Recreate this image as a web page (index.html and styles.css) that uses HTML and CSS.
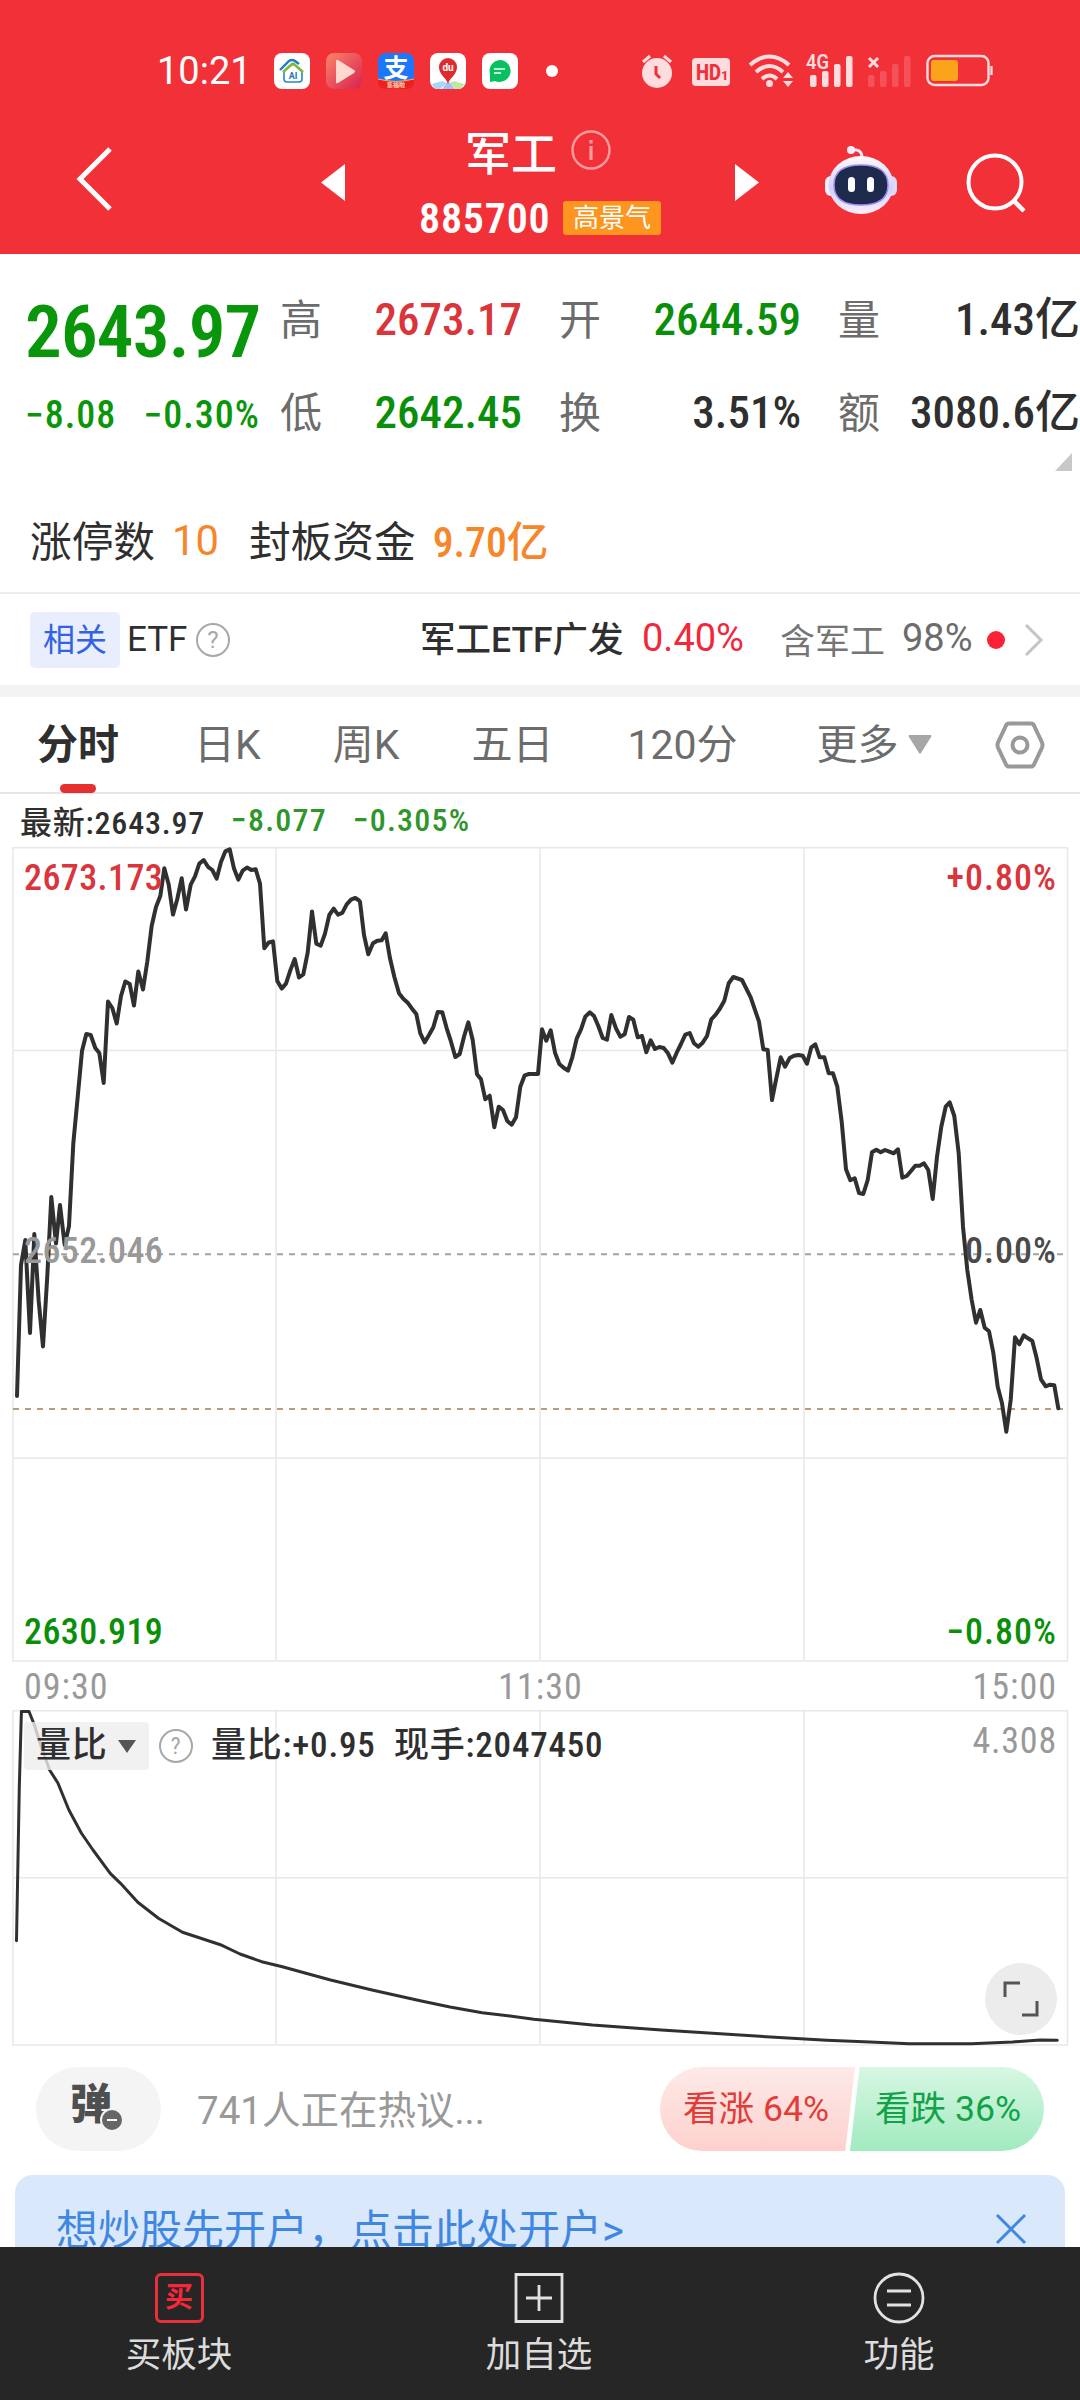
FILE: index.html
```html
<!DOCTYPE html>
<html lang="zh-CN">
<head>
    <meta charset="UTF-8">
    <meta name="viewport" content="width=device-width, initial-scale=1.0">
    <title>军工 885700</title>
    <link rel="stylesheet" href="styles.css">
</head>
<body>
<div class="app">
    <!-- Header -->
    <header class="header">
        <div class="status-bar">
            <span class="clock">10:21</span>
            <div class="app-icons">
                <svg width="36" height="36" viewBox="0 0 36 36">
                    <rect width="36" height="36" rx="8" fill="#fff"/>
                    <path d="M10 19v7q0 3 3 3h12q3 0 3-3v-8" fill="none" stroke="#2b86c5" stroke-width="1.6"/>
                    <path d="M6 17L15 8q3-2 6 0l4 3" fill="none" stroke="#1d7fc0" stroke-width="2.4"/>
                    <path d="M9 19l8-7q2-2 4 0l8 7" fill="none" stroke="#7db93b" stroke-width="2.6"/>
                    <text x="19" y="26" font-size="9" font-weight="700" text-anchor="middle" fill="#2277b8">AI</text>
                </svg>
                <svg width="36" height="36" viewBox="0 0 36 36">
                    <defs>
                        <linearGradient id="play" x1="0" y1="0" x2="1" y2="1">
                            <stop offset="0" stop-color="#fb8468"/>
                            <stop offset="1" stop-color="#d92250"/>
                        </linearGradient>
                    </defs>
                    <rect width="36" height="36" rx="8" fill="url(#play)"/>
                    <path d="M10 8v21q0 2 2 1l16-10q2-2 0-3L12 7q-2-1-2 1z" fill="#ffd9d0"/>
                </svg>
                <svg width="36" height="36" viewBox="0 0 36 36">
                    <rect width="36" height="36" rx="8" fill="#1c77fb"/>
                    <path d="M0 26q18 5 36 0v3q0 7-8 7H8q-8 0-8-7z" fill="#f01f1c"/>
                    <path d="M0 26q18 5 36 0" fill="none" stroke="#ffb054" stroke-width="1.2"/>
                    <text x="18" y="24" font-size="25" font-weight="700" text-anchor="middle" fill="#fff">支</text>
                    <text x="18" y="34" font-size="6" font-weight="700" text-anchor="middle" fill="#ffd9b8">集福啦</text>
                </svg>
                <svg width="36" height="36" viewBox="0 0 36 36">
                    <rect width="36" height="36" rx="8" fill="#fff"/>
                    <path d="M2 31l10-3 5 2-7 6H8q-5 0-6-5z" fill="#a9d6f5"/>
                    <path d="M34 31l-10-3-5 2 7 6h2q5 0 6-5z" fill="#bfe6a5"/>
                    <path d="M12 36l6-8 7 8z" fill="#9cc5f7"/>
                    <path d="M18 31c-2-7-9-9-9-17a9 9 0 0 1 18 0c0 8-7 10-9 17z" fill="#e12a2d"/>
                    <text x="18" y="18" font-size="10" font-weight="700" text-anchor="middle" fill="#fff">du</text>
                </svg>
                <svg width="36" height="36" viewBox="0 0 36 36">
                    <rect width="36" height="36" rx="8" fill="#fff"/>
                    <path d="M18 7a11 11 0 1 1-5 21l-5 1v-8A11 11 0 0 1 18 7z" fill="#07c160"/>
                    <path d="M12 16h11M12 20h7" stroke="#fff" stroke-width="1.6"/>
                </svg>
            </div>
            <span class="status-dot"></span>
            <svg class="status-icons" width="360" height="40" viewBox="636 50 360 40">
                <g fill="#ffdcdd">
                    <circle cx="657" cy="73" r="15"/>
                    <path d="M643 62l7-6M671 62l-7-6" stroke="#ffdcdd" stroke-width="3"/>
                    <path d="M656 66v8l4 4" fill="none" stroke="#f23038" stroke-width="3"/>
                    <rect x="692" y="58" width="38" height="28" rx="4"/>
                    <circle cx="769.500" cy="83.500" r="3.500"/>
                    <path d="M783 80l5-6 5 6zM783 83l5 6 5-6z" transform="translate(0 -2)"/>
                    <rect x="810" y="75" width="6.500" height="12" rx="2"/>
                    <rect x="822" y="71" width="6.500" height="16" rx="2"/>
                    <rect x="834" y="64" width="6.500" height="23" rx="2"/>
                    <rect x="846" y="56" width="6.500" height="31" rx="2"/>
                    <text x="806" y="69" font-size="20" font-weight="600" textLength="23" lengthAdjust="spacingAndGlyphs">4G</text>
                </g>
                <text x="696" y="80" font-size="22" font-weight="800" fill="#f23038" textLength="25" lengthAdjust="spacingAndGlyphs">HD</text>
                <text x="721" y="80" font-size="13" font-weight="800" fill="#f23038">1</text>
                <g fill="none" stroke="#ffdcdd" stroke-width="4">
                    <path d="M750 65q19.500-17 39 0"/>
                    <path d="M756 72q13.500-12 27 0"/>
                    <path d="M762 79q7.500-7 15 0"/>
                    <path d="M869 58l9 9M878 58l-9 9" stroke-width="3"/>
                </g>
                <g fill="#fff" opacity="0.160">
                    <rect x="868" y="75" width="6.500" height="12" rx="2"/>
                    <rect x="880" y="71" width="6.500" height="16" rx="2"/>
                    <rect x="892" y="64" width="6.500" height="23" rx="2"/>
                    <rect x="904" y="56" width="6.500" height="31" rx="2"/>
                </g>
                <rect x="927.500" y="56" width="61" height="29" rx="7" fill="none" stroke="#ffdcdd" stroke-width="2.400"/>
                <rect x="931" y="60" width="27" height="21" rx="3" fill="#fba31a"/>
                <path d="M991.500 66v9" stroke="#ffdcdd" stroke-width="2.400"/>
            </svg>
        </div>
        <div class="nav-bar">
            <svg class="back" width="40" height="66" viewBox="0 0 40 66"><path d="M35 3L5 33l30 30" fill="none" stroke="#fff" stroke-width="5"/></svg>
            <svg class="prev" width="24" height="37" viewBox="0 0 24 37"><path d="M24 0v37L0 18.500z" fill="#fff"/></svg>
            <div class="title">
                <div class="title-name">
                    <span>军工</span>
                    <svg width="40" height="40" viewBox="0 0 40 40"><circle cx="20" cy="20" r="18.500" fill="none" stroke="#ff9c9f" stroke-width="2.400"/><path d="M20 16v14M20 10v3.500" stroke="#ff9c9f" stroke-width="3.200"/></svg>
                </div>
                <div class="title-code">
                    <span>885700</span>
                    <span class="badge">高景气</span>
                </div>
            </div>
            <svg class="next" width="24" height="37" viewBox="0 0 24 37"><path d="M0 0v37l24-18.500z" fill="#fff"/></svg>
            <svg class="robot" width="72" height="68" viewBox="0 0 72 68">
                <defs>
                    <linearGradient id="face" x1="0" y1="0" x2="0" y2="1">
                        <stop offset="0" stop-color="#fffafa"/>
                        <stop offset="0.550" stop-color="#cfd0fb"/>
                        <stop offset="1" stop-color="#fbeef8"/>
                    </linearGradient>
                </defs>
                <path d="M26 4q11-2 11 8" fill="none" stroke="#f1e8fb" stroke-width="3"/>
                <circle cx="26" cy="4" r="4" fill="#f8eefb"/>
                <rect x="0" y="30" width="12" height="20" rx="6" fill="#f4effc"/>
                <rect x="60" y="30" width="12" height="20" rx="6" fill="#ded8fb"/>
                <ellipse cx="36" cy="39" rx="32.500" ry="29" fill="url(#face)"/>
                <path d="M36 19c20 0 27 8 27 20s-7 20-27 20S9 51 9 39s7-20 27-20z" fill="#1d2a4c" stroke="#9b8df0" stroke-width="1.500"/>
                <rect x="23" y="31" width="7" height="15" rx="3.500" fill="#fff"/>
                <rect x="42" y="31" width="7" height="15" rx="3.500" fill="#fff"/>
            </svg>
            <svg class="search" width="62" height="64" viewBox="0 0 62 64"><circle cx="29" cy="31" r="26.500" fill="none" stroke="#fff" stroke-width="4"/><path d="M47 49l11 11" stroke="#fff" stroke-width="4.500"/></svg>
        </div>
    </header>

    <!-- Quote -->
    <section class="quote">
        <div class="price">
            <div class="price-now">2643.97</div>
            <div class="price-change"><span>−8.08</span><span>−0.30%</span></div>
        </div>
        <div class="quote-grid">
            <span class="label">高</span><span class="value red">2673.17</span>
            <span class="label">开</span><span class="value green">2644.59</span>
            <span class="label">量</span><span class="value">1.43亿</span>
            <span class="label">低</span><span class="value green">2642.45</span>
            <span class="label">换</span><span class="value">3.51%</span>
            <span class="label">额</span><span class="value">3080.6亿</span>
        </div>
        <svg class="expand" width="17" height="18" viewBox="0 0 17 18"><path d="M17 0v18H0z" fill="#c8c8c8"/></svg>
    </section>
    <section class="limits">
        <span>涨停数</span><span class="orange count">10</span>
        <span class="seal">封板资金</span><span class="orange">9.70亿</span>
    </section>

    <!-- Related ETF -->
    <section class="etf">
        <span class="etf-tag">相关</span>
        <span class="etf-text">ETF</span>
        <span class="help">?</span>
        <span class="etf-name">军工ETF广发</span>
        <span class="etf-rate">0.40%</span>
        <span class="etf-hold">含军工</span>
        <span class="etf-share">98%</span>
        <span class="etf-dot"></span>
        <svg width="20" height="34" viewBox="0 0 20 34"><path d="M2 2l15 15L2 32" fill="none" stroke="#c4c4c4" stroke-width="3"/></svg>
    </section>

    <!-- Period tabs -->
    <nav class="tabs">
        <span class="tab active">分时</span>
        <span class="tab">日K</span>
        <span class="tab">周K</span>
        <span class="tab">五日</span>
        <span class="tab">120分</span>
        <span class="tab">更多</span>
        <svg class="caret" width="24" height="19" viewBox="0 0 24 19"><path d="M1 0h22q1 1 0 2L13 18q-1 1-2 0L1 2q-1-1 0-2z" fill="#a6a6a6"/></svg>
        <svg class="gear" width="50" height="48" viewBox="0 0 50 48"><path d="M14 2.500h22q2 0 3 2l8 17q1 2.500 0 5l-8 17q-1 2-3 2H14q-2 0-3-2l-8-17q-1-2.500 0-5l8-17q1-2 3-2z" fill="none" stroke="#999" stroke-width="4"/><circle cx="25" cy="24" r="7.500" fill="none" stroke="#999" stroke-width="4"/></svg>
    </nav>

    <!-- Price chart -->
    <div class="latest">
        <span>最新:2643.97</span><span class="green2">−8.077</span><span class="green2">−0.305%</span>
    </div>
    <section class="chart price-chart">
        <svg width="1080" height="817" viewBox="0 846 1080 817">
            <path class="grid-line" d="M13 847.700h1054.500V1661H13zM276 847.700V1661M540 847.700V1661M804 847.700V1661M13 1050.500h1054.500M13 1458h1054.500"/>
            <path d="M13 1254.300h1050" stroke="#a2a2a2" stroke-width="2" stroke-dasharray="6 6"/>
            <path d="M13 1409h1050" stroke="#b79d7d" stroke-width="2" stroke-dasharray="6 6"/>
            <polyline class="price-line" points="17,1396 21,1265 25.3,1240 30,1333 34.3,1234 38.700,1301 43,1346.500 47.300,1276 51.300,1197 56,1243.500 60,1205 64.700,1245 69,1226 73.300,1143.500 77.700,1097 82,1051 86.300,1034 90.700,1035 95.300,1048 99.300,1053 103.700,1083 108,1001.500 112.300,1008 116.700,1023.500 121,996 125.300,981.500 129.700,984 134,1005.500 138.300,971.500 143,989.500 147.300,961.500 151.700,925.700 156,907 160.300,896 164.300,868.200 168.700,884.600 173,914.600 177.300,899 181.700,878.200 186,909.600 190.700,884.600 195,876.400 199.300,863.600 203.700,860 208,866.800 212.300,870 216.700,878.600 221,862 225.300,851.400 229.700,849.300 234,868.600 238.300,879.600 242.700,870.700 247,867.500 251.300,870 255.700,869.300 260,883.600 264.300,948.200 268.700,942.500 273,941.400 277.300,981 281.700,988.600 286,983.600 290.300,970.400 294.700,959 299,977.500 303.300,974.300 307.700,952.500 312,911.400 316.300,943.600 320.700,945.700 325,933.600 329.300,915 333.700,908.600 338,914.600 342.300,912.900 346.700,904.300 351,899.600 355.300,897.900 359,900.500 360,901.700 364,935 368.300,954.300 373,943.300 377.300,940.700 381.700,940.300 385.700,933.300 390,958.300 394.300,976.700 399,993.300 403.300,998.700 407.700,1002.700 412,1008.700 416.300,1014 420.300,1033.300 424.700,1042.300 429,1035 433.300,1027.300 437.700,1012 442.300,1012.300 446.700,1028.300 451,1041.700 455.300,1057 459.700,1054 464,1036.700 468.300,1022.300 472.700,1040 477,1074.300 481,1079.300 485.300,1099.300 489.700,1095.700 494.300,1127.300 498.700,1106.700 503,1110 507.300,1121 511.700,1124.700 516,1117.300 520.300,1086.700 524.700,1075.300 529,1074 538,1074 542,1029.300 546.300,1040.700 550.700,1030.300 555,1052.700 559.300,1064 564,1068 568,1070.700 572.300,1057.300 576.700,1038.700 581,1029.300 585.300,1016.700 589.700,1012.300 594,1016 598.300,1026 602.700,1038 607,1039.700 611.300,1015 616,1028.300 620.300,1036.700 624.700,1034.300 629,1017 633.300,1019.700 637.700,1037.300 642,1036 646.300,1052.300 650.700,1040.300 655,1049 659.300,1047 663.700,1048 668,1053.300 672.300,1062.700 676.700,1052.700 681,1044 685.300,1034.700 689.700,1033 694,1043.300 698.300,1046.700 702.700,1042.700 707,1036 711.300,1019.300 715.700,1014.700 720,1008.500 724.300,1000.700 728.700,983.300 733.300,977 742,980 750.700,997.300 759,1021.700 763.300,1049.300 767.700,1050 772,1100 776.300,1078.300 780.700,1057.300 785,1066.700 789.700,1058 794,1055.700 798.300,1055 802.700,1055.700 807,1063.700 811.300,1047.300 815.300,1044.300 819.700,1057.300 824.300,1057.300 828.700,1073.300 833,1073.300 837.300,1086.700 841.700,1121.700 846,1169.300 850.300,1180.300 854.700,1178.300 859,1193 863.300,1194 867.700,1180 872,1152.300 876.300,1149.700 880.700,1152.300 885,1150 889.300,1151.700 893.700,1153.300 898,1149.300 902.300,1177.700 906.700,1176 911,1171 915.300,1165.700 919.700,1165.700 924,1163.300 928.300,1170 932.700,1199 937,1156.700 941.300,1126.700 945.700,1106.700 949.700,1102.300 954.300,1116 958.700,1153.300 963,1226.700 967.300,1270 971.700,1300 976,1322.700 980.300,1310 984.700,1327.700 989,1331.300 993.300,1352.700 997.700,1386.700 1002,1403.300 1006.300,1431.700 1010.700,1400 1015,1337.300 1019.300,1344.300 1023.700,1335.300 1028,1338.300 1032.300,1341 1036.700,1358.300 1041,1379.300 1045.700,1386.300 1050,1384.700 1054.300,1385.300 1058.300,1408.300"/>
        </svg>
        <span class="mark top left red">2673.173</span>
        <span class="mark top right red">+0.80%</span>
        <span class="mark middle left grey">2652.046</span>
        <span class="mark middle right zero">0.00%</span>
        <span class="mark bottom left green">2630.919</span>
        <span class="mark bottom right green">−0.80%</span>
    </section>
    <div class="axis"><span>09:30</span><span>11:30</span><span>15:00</span></div>

    <!-- Volume ratio chart -->
    <section class="chart ratio-chart">
        <svg width="1080" height="338" viewBox="0 1709 1080 338">
            <path class="grid-line" d="M13 1710.700h1054.500V2045H13zM276 1710.700V2045M540 1710.700V2045M804 1710.700V2045M13 1877.700h1054.500"/>
            <polyline class="ratio-line" points="16.500,1940.700 19.300,1787 21.400,1711.500 29,1711.500 34.400,1725 41.300,1747 49.600,1770 57.900,1783 68.900,1810 81.300,1833 93,1850 110.200,1873.300 120.500,1883.300 137.800,1902.300 158.400,1918.300 182.500,1932.300 200,1938 220.400,1944.700 240,1954 261.700,1961.700 282.400,1966.700 305,1973 330.600,1980 372,1990 420.200,2000.700 450,2007 482.200,2012.700 510,2016 533.800,2019.300 592.400,2025 661.300,2030 743.900,2035.300 826.600,2040.300 870,2042 909.300,2043.700 971.200,2043.700 1012.600,2042 1040,2040 1057.300,2040.300"/>
        </svg>
        <div class="ratio-info">
            <span class="ratio-select">量比<svg width="18" height="13" viewBox="0 0 18 13"><path d="M0 0h18L9 13z" fill="#555"/></svg></span>
            <span class="help">?</span>
            <span class="ratio-value">量比:+0.95</span>
            <span class="ratio-hand">现手:2047450</span>
        </div>
        <span class="ratio-max">4.308</span>
        <span class="fullscreen"><svg width="40" height="40" viewBox="0 0 40 40"><path d="M4 18V4h15M36 22v14H21" fill="none" stroke="#555" stroke-width="3"/></svg></span>
    </section>

    <!-- Discussion -->
    <section class="discuss">
        <span class="danmu">弹<svg width="24" height="24" viewBox="0 0 24 24"><circle cx="12" cy="12" r="11" fill="#666" stroke="#f4f4f4" stroke-width="2"/><path d="M7 12h10" stroke="#fff" stroke-width="2"/></svg></span>
        <span class="discuss-text">741人正在热议...</span>
        <div class="vote">
            <span class="vote-up">看涨 64%</span>
            <span class="vote-down">看跌 36%</span>
        </div>
    </section>
    <div class="banner">
        <span>想炒股先开户，点击此处开户&gt;</span>
        <svg width="32" height="32" viewBox="0 0 32 32"><path d="M2 2l28 28M30 2L2 30" stroke="#3f87e0" stroke-width="3"/></svg>
    </div>

    <!-- Bottom bar -->
    <footer class="bottom-bar">
        <div class="bottom-item">
            <span class="buy-icon">买</span>
            <span>买板块</span>
        </div>
        <div class="bottom-item">
            <svg width="52" height="52" viewBox="0 0 52 52"><path d="M3 2.500h46v47H3zM26 13v26M13 26h26" fill="none" stroke="#e2e2e2" stroke-width="2.800"/></svg>
            <span>加自选</span>
        </div>
        <div class="bottom-item">
            <svg width="52" height="52" viewBox="0 0 52 52"><circle cx="26" cy="26" r="24" fill="none" stroke="#e2e2e2" stroke-width="2.800"/><path d="M14 19h24M14 33h24" stroke="#e2e2e2" stroke-width="2.800"/></svg>
            <span>功能</span>
        </div>
    </footer>
</div>
</body>
</html>
```
FILE: styles.css
```css
* {
    box-sizing: border-box;
}

body {
    margin: 0;
    background-color: #fff;
    color: #2f2f2f;
    font-family: Roboto, "Noto Sans CJK SC", sans-serif;
}

.app {
    width: 1080px;
    height: 2400px;
    overflow: hidden;
    display: flex;
    flex-direction: column;
}

.app > * {
    flex-shrink: 0;
}

svg {
    display: block;
    flex-shrink: 0;
}

span {
    white-space: nowrap;
}

.red { color: #d9353b; }
.green { color: #0a8f0a; }
.green2 { color: #2f962b; letter-spacing: 1.2px; }
.orange { color: #f5862a; }
.grey { color: #999; }

/* Header */
.header {
    height: 254px;
    background-color: #f23038;
    color: #fff;
}

.status-bar {
    height: 114px;
    padding: 28px 0 0 157px;
    display: flex;
    align-items: center;
}

.clock {
    width: 117px;
    font-size: 38px;
}

.app-icons {
    display: flex;
    gap: 16px;
}

.status-dot {
    width: 12px;
    height: 12px;
    margin-left: 28px;
    border-radius: 50%;
    background-color: #fff;
}

.status-icons {
    margin: -2px 0 0 78px;
}

.nav-bar {
    height: 140px;
    display: flex;
    align-items: flex-start;
}

.back { margin: 32px 0 0 75px; }
.prev { margin: 50px 0 0 206px; }
.next { margin: 50px 0 0 0; }
.robot { margin: 32px 0 0 66px; }
.search { margin: 37px 0 0 69px; }

.title {
    width: 390px;
    padding-left: 74px;
}

.title-name {
    height: 73px;
    padding: 0 0 2px 46px;
    display: flex;
    align-items: center;
    gap: 14px;
    font-size: 46px;
    font-weight: 500;
}

.title-code {
    height: 62px;
    display: flex;
    align-items: center;
    justify-content: space-between;
    width: 242px;
    font-size: 42px;
    font-weight: 600;
    font-stretch: 87%;
    letter-spacing: 0.8px;
}

.badge {
    height: 34px;
    padding: 0 10px;
    border-radius: 3px;
    background-color: #fd951f;
    font-size: 26px;
    font-weight: 400;
    line-height: 34px;
    letter-spacing: 0;
}

/* Quote */
.quote {
    height: 231px;
    display: flex;
    position: relative;
}

.price {
    width: 280px;
    padding: 34px 0 0 25px;
    color: #0a960a;
    font-stretch: 87%;
}

.price-now {
    height: 88px;
    font-size: 73px;
    font-weight: 600;
    line-height: 88px;
    letter-spacing: -0.8px;
}

.price-change {
    width: 235px;
    margin-top: 18px;
    display: flex;
    justify-content: space-between;
    font-size: 38px;
    font-weight: 500;
    line-height: 42px;
    letter-spacing: 1px;
}

.quote-grid {
    height: 215px;
    padding-top: 29px;
    display: grid;
    grid-template-columns: 42px 200px 79px 200px 79px 200px;
    grid-template-rows: 93px 93px;
    align-items: baseline;
    font-size: 45px;
    font-weight: 500;
    font-stretch: 87%;
}

.label {
    color: #6c6c6c;
    font-size: 42px;
    font-weight: 400;
    justify-self: end;
}

.value {
    justify-self: end;
}

.expand {
    position: absolute;
    right: 8px;
    bottom: 14px;
}

.limits {
    height: 107px;
    padding: 0 0 0 30px;
    display: flex;
    align-items: center;
    gap: 17px;
    font-size: 41.700px;
}

.limits .orange {
    font-weight: 500;
    font-stretch: 87%;
}

.limits .count {
    padding-top: 3px;
    font-weight: 400;
    font-stretch: 100%;
}

.seal {
    margin-left: 13px;
}

/* Related ETF */
.etf {
    height: 105px;
    padding: 0 36px 0 30px;
    display: flex;
    align-items: center;
    border-top: 2px solid #ececec;
    border-bottom: 12px solid #f3f3f3;
    font-size: 35px;
}

.etf-tag {
    width: 90px;
    height: 56px;
    border-radius: 5px;
    background-color: #e8eefd;
    color: #3462e0;
    font-size: 32px;
    line-height: 56px;
    text-align: center;
}

.etf-text {
    width: 69px;
    margin-left: 7px;
    font-size: 35px;
}

.help {
    width: 34px;
    height: 34px;
    border: 2px solid #a8a8a8;
    border-radius: 50%;
    color: #a8a8a8;
    font-size: 24px;
    font-weight: 400;
    line-height: 30px;
    text-align: center;
}

.etf-name {
    width: 222px;
    margin-left: 190px;
    font-size: 35.500px;
    font-weight: 500;
    line-height: 50px;
}

.etf-rate {
    width: 138px;
    padding-bottom: 3px;
    color: #f0283c;
    font-size: 38px;
}

.etf-hold {
    width: 122px;
    padding-bottom: 2px;
    color: #757575;
}

.etf-share {
    width: 85px;
    padding-bottom: 3px;
    color: #6c6c6c;
    font-size: 38px;
}

.etf-dot {
    width: 18px;
    height: 18px;
    margin-right: auto;
    border-radius: 50%;
    background-color: #fb2236;
}

/* Period tabs */
.tabs {
    height: 97px;
    padding-left: 37px;
    display: flex;
    align-items: center;
    border-bottom: 2px solid #e6e6e6;
    color: #6c6c6c;
    font-size: 41px;
}

.tab {
    margin-right: 72px;
    line-height: 100px;
}

.tab.active {
    position: relative;
    margin-right: 75px;
    color: #2f2f2f;
    font-weight: 700;
}

.tab.active::after {
    content: '';
    position: absolute;
    left: 23px;
    bottom: 2px;
    width: 36px;
    height: 9px;
    border-radius: 5px;
    background-color: #e63030;
}

.tab:nth-child(4) { margin-right: 74px; }
.tab:nth-child(5) { margin-right: 79px; }
.tab:nth-child(6) { margin-right: 9px; }
.gear { margin-left: 63px; }

/* Price chart */
.latest {
    height: 52px;
    padding: 0 0 0 20px;
    display: flex;
    align-items: center;
    gap: 26px;
    font-size: 32px;
    font-weight: 500;
    font-stretch: 87%;
    letter-spacing: 0.8px;
}

.chart {
    position: relative;
}

.grid-line {
    fill: none;
    stroke: #e8e8e8;
    stroke-width: 1.5;
}

.price-line,
.ratio-line {
    fill: none;
    stroke: #303030;
    stroke-width: 4;
    stroke-linejoin: round;
    stroke-linecap: round;
}

.ratio-line {
    stroke-width: 3;
}

.mark {
    position: absolute;
    height: 42px;
    font-size: 36px;
    font-weight: 500;
    font-stretch: 87%;
    line-height: 42px;
    letter-spacing: 0.4px;
}

.mark.left { left: 24px; }
.mark.right { right: 23px; letter-spacing: 1px; }
.mark.top { top: 11px; }
.mark.middle { top: 384px; }
.mark.bottom { bottom: 10px; }
.mark.zero { color: #4a4a4a; }

.axis {
    height: 46px;
    padding: 2px 23px 0 24px;
    display: flex;
    align-items: center;
    justify-content: space-between;
    color: #999;
    font-size: 36px;
    font-stretch: 87%;
    letter-spacing: 1px;
}

/* Volume ratio chart */
.ratio-info {
    position: absolute;
    left: 24px;
    top: 13px;
    height: 48px;
    display: flex;
    align-items: center;
    font-size: 35px;
    font-weight: 500;
    font-stretch: 87%;
    letter-spacing: 0.8px;
    line-height: 44px;
}

.ratio-select {
    width: 125px;
    height: 48px;
    margin-right: 10px;
    padding: 0 0 0 12px;
    display: flex;
    align-items: center;
    gap: 10px;
    border-radius: 4px;
    background-color: rgba(238, 238, 238, 0.8);
}

.ratio-value {
    width: 183px;
    margin-left: 18px;
}

.ratio-max {
    position: absolute;
    right: 23px;
    top: 11px;
    color: #999;
    font-size: 36px;
    font-stretch: 87%;
    letter-spacing: 0.8px;
    line-height: 42px;
}

.fullscreen {
    position: absolute;
    right: 23px;
    top: 254px;
    width: 72px;
    height: 72px;
    border-radius: 50%;
    background-color: #ececec;
    display: flex;
    align-items: center;
    justify-content: center;
}

/* Discussion */
.discuss {
    height: 128px;
    padding: 20px 36px 0;
    display: flex;
}

.danmu {
    position: relative;
    width: 125px;
    height: 84px;
    border-radius: 42px;
    background-color: #f4f4f4;
    color: #4f4f4f;
    font-size: 42px;
    font-weight: 800;
    line-height: 76px;
    padding-left: 34px;
}

.danmu svg {
    position: absolute;
    left: 64px;
    top: 41px;
}

.discuss-text {
    flex: 1;
    margin-left: 36px;
    color: #999;
    font-size: 38.500px;
    line-height: 87px;
}

.vote {
    display: flex;
    width: 384px;
    height: 84px;
    font-size: 35.600px;
    line-height: 85px;
}

.vote-up {
    width: 195px;
    padding-left: 23px;
    border-radius: 42px 0 0 42px;
    background: linear-gradient(#fdeae8, #fdd1cd);
    clip-path: polygon(0 0, 100% 0, 95% 100%, 0 100%);
    color: #e23c38;
}

.vote-down {
    width: 194px;
    margin-left: -5px;
    padding-left: 25px;
    border-radius: 0 42px 42px 0;
    background: linear-gradient(#d8f7e3, #a1eabf);
    clip-path: polygon(5% 0, 100% 0, 100% 100%, 0 100%);
    color: #12a349;
}

.banner {
    height: 72px;
    margin: 0 15px;
    padding: 29px 38px 0 41px;
    display: flex;
    justify-content: space-between;
    border-radius: 18px 18px 0 0;
    background-color: #dae8fb;
    color: #3f87e0;
    font-size: 42px;
    line-height: 54px;
    overflow: hidden;
}

.banner svg {
    margin-top: 9px;
}

/* Bottom bar */
.bottom-bar {
    flex: 1;
    padding-top: 25px;
    display: flex;
    background-color: #262626;
    color: #dcdcdc;
    font-size: 35.500px;
}

.bottom-item {
    width: 358px;
    display: flex;
    flex-direction: column;
    align-items: center;
    gap: 2px;
}

.bottom-item:nth-child(2) {
    width: 362px;
}

.buy-icon {
    width: 49px;
    height: 50px;
    margin: 1px 0;
    border: 3px solid #e8303c;
    border-radius: 6px;
    color: #f5283a;
    font-size: 28px;
    font-weight: 700;
    line-height: 43px;
    text-align: center;
}
```
